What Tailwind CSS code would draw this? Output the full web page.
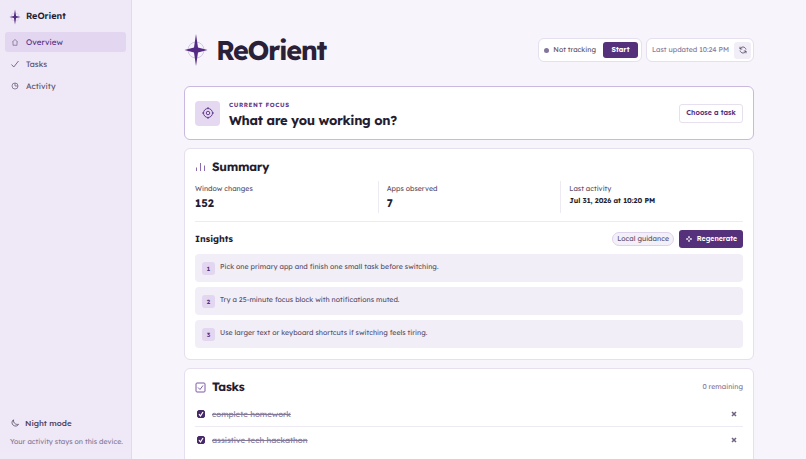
<!DOCTYPE html>
<html lang="en">
<head>
    <meta charset="UTF-8">
    <meta name="viewport" content="width=device-width, initial-scale=1.0">
    <title>ReOrient</title>
    <script src="https://cdn.jsdelivr.net/npm/@tailwindcss/browser@4"></script>
</head>
<body class="flex h-screen overflow-hidden bg-[#f7f5fb] font-[Lexend,Inter,sans-serif] text-[7px] leading-[10px] text-[#5b5169] antialiased [text-rendering:geometricPrecision]">
    <!-- Sidebar -->
    <aside class="flex w-[132px] shrink-0 flex-col border-r border-[#e2daec] bg-[#efe8f6] px-[5px] pt-2 pb-3">
        <a href="#" class="flex h-[18px] items-center gap-[5px] pl-1 text-[9px] font-semibold text-[#241d31]">
            <svg class="h-4 w-3" viewBox="0 0 24 32">
                <circle cx="12" cy="16" r="8" fill="none" stroke="#dccfea" stroke-width="1.5"/>
                <path d="M12 1l2.2 12.8L23 16l-8.800 2.200L12 31l-2.200-12.800L1 16l8.800-2.200z" fill="#512b80"/>
            </svg>
            ReOrient
        </a>
        <nav class="mt-[6px] flex flex-col gap-[2px] text-[8px]">
            <a href="#overview" class="flex h-5 items-center gap-[7px] rounded-[3px] bg-[#e3d6f0] px-[6px] text-[#553285]">
                <svg class="h-2 w-2" viewBox="0 0 16 16" fill="none" stroke="#6d6080" stroke-width="1.300"><path d="M2.500 8L8 3l5.500 5M4 7v7.500h8V7"/></svg>
                Overview
            </a>
            <a href="#tasks" class="flex h-5 items-center gap-[7px] rounded-[3px] px-[6px]">
                <svg class="h-2 w-2" viewBox="0 0 16 16" fill="none" stroke="#6d6080" stroke-width="1.800"><path d="M1 9l4.500 5L15 2"/></svg>
                Tasks
            </a>
            <a href="#activity" class="flex h-5 items-center gap-[7px] rounded-[3px] px-[6px]">
                <svg class="h-2 w-2" viewBox="0 0 16 16" fill="none" stroke="#6d6080" stroke-width="1.500"><circle cx="8" cy="8" r="6"/><path d="M8 2v6h6"/></svg>
                Activity
            </a>
        </nav>
        <button type="button" class="mt-auto flex h-5 items-center gap-[6px] px-[6px] text-[8px] font-medium text-[#4d425d]">
            <svg class="h-2 w-2" viewBox="0 0 16 16" fill="none" stroke="#4d425d" stroke-width="1.500"><path d="M5 1.500C1 4 1 10 4.500 12.500S13 15 15 10.500C11 12 4 9 5 1.500z"/></svg>
            Night mode
        </button>
        <p class="mt-1 pl-[5px] whitespace-nowrap text-[#85799a]">Your activity stays on this device.</p>
    </aside>

    <!-- Main content -->
    <main class="min-w-0 flex-1 overflow-hidden px-[52px] pt-[30px]">
        <header class="flex h-10 items-center justify-between">
            <div class="flex items-center gap-2">
                <svg class="h-8 w-6" viewBox="0 0 24 32">
                    <circle cx="12" cy="16" r="8" fill="none" stroke="#d3c7e2" stroke-width="1"/>
                    <path d="M12 0l2 13.500L23.500 16 14 18.500 12 32l-2-13.500L.5 16 10 13.500z" fill="#552a85"/>
                </svg>
                <h1 class="text-[27px] leading-8 font-bold tracking-tighter text-[#2a2139]">ReOrient</h1>
            </div>
            <div class="flex gap-1">
                <div class="flex h-6 items-center rounded-md border border-[#e5dfee] bg-white pr-[3px] pl-[5px]">
                    <span class="mr-1 h-[5px] w-[5px] rounded-full bg-[#82779a]"></span>
                    <span>Not tracking</span>
                    <button type="button" class="ml-[7px] h-4 w-[35px] rounded-[3px] bg-[#55307b] font-bold text-white">Start</button>
                </div>
                <div class="flex h-6 items-center gap-[5px] rounded-md border border-[#e5dfee] bg-white pr-[2px] pl-[5px] text-[#85799a]">
                    <span>Last updated 10:24 PM</span>
                    <button type="button" aria-label="Refresh" class="flex h-[17px] w-[17px] items-center justify-center rounded-[3px] bg-[#f2eef8]">
                        <svg class="h-2 w-2" viewBox="0 0 16 16" fill="none" stroke="#4d425d" stroke-width="1.600"><path d="M2 1.500V6h4.500M2 6C4 1 12 0 14 7M14 14.500V10H9.500M14 10C12 15 4 16 2 9"/></svg>
                    </button>
                </div>
            </div>
        </header>

        <!-- Current focus -->
        <section class="mt-4 flex h-[54px] items-center rounded-md border border-[#c9b9de] bg-white px-[10px]">
            <div class="flex h-[25px] w-[25px] items-center justify-center rounded-[4px] bg-[#e5d8f1]">
                <svg class="h-3 w-3" viewBox="0 0 24 24" fill="none" stroke="#65408f" stroke-width="2"><circle cx="12" cy="12" r="9"/><circle cx="12" cy="12" r="3.500"/><path d="M12 0v4M12 20v4M0 12h4M20 12h4"/></svg>
            </div>
            <div class="ml-[9px] pt-[2px]">
                <p class="text-[6px] leading-[10px] font-bold tracking-widest text-[#603a8c]">CURRENT FOCUS</p>
                <h2 class="mt-[3px] text-[13px] leading-4 font-bold tracking-tight text-[#241d31]">What are you working on?</h2>
            </div>
            <button type="button" class="ml-auto h-[19px] w-16 rounded-[3px] border border-[#e5dfee] font-semibold whitespace-nowrap text-[#55307b]">Choose a task</button>
        </section>

        <!-- Summary -->
        <section id="overview" class="mt-2 rounded-md border border-[#e5dfee] bg-white px-[10px] pt-[10px] pb-[11px]">
            <div class="flex h-4 items-center gap-[6px]">
                <svg class="h-[11px] w-[11px]" viewBox="0 0 22 22" fill="none" stroke="#8a6bad" stroke-width="2"><path d="M3 11v7M11 2v16M19 7v11"/></svg>
                <h2 class="text-[12px] leading-4 font-bold tracking-tight text-[#241d31]">Summary</h2>
            </div>
            <dl class="mt-[6px] grid grid-cols-3 border-b border-[#eeeaf3] pb-2">
                <div class="h-8 py-[3px]">
                    <dt>Window changes</dt>
                    <dd class="mt-[3px] text-[11px] leading-3 font-bold text-[#241d31]">152</dd>
                </div>
                <div class="h-8 border-l border-[#eeeaf3] py-[3px] pl-2">
                    <dt>Apps observed</dt>
                    <dd class="mt-[3px] text-[11px] leading-3 font-bold text-[#241d31]">7</dd>
                </div>
                <div class="h-8 border-l border-[#eeeaf3] py-[3px] pl-2">
                    <dt>Last activity</dt>
                    <dd class="mt-[2px] font-bold text-[#241d31]">Jul 31, 2026 at 10:20 PM</dd>
                </div>
            </dl>
            <div class="mt-2 flex h-[18px] items-center gap-[5px]">
                <h3 class="mr-auto pt-[2px] text-[9px] font-bold text-[#241d31]">Insights</h3>
                <span class="flex h-[14px] items-center rounded-full border border-[#ddd3ea] bg-[#f4f0f9] px-1">Local guidance</span>
                <button type="button" class="flex h-[18px] w-16 items-center justify-center gap-1 rounded-[3px] bg-[#55307b] font-semibold text-white">
                    <svg class="h-2 w-2" viewBox="0 0 16 16" fill="none" stroke="#ffffff" stroke-width="1.300"><path d="M8 2l1.500 4.500L14 8 9.500 9.500 8 14 6.500 9.500 2 8l4.500-1.500z"/></svg>
                    Regenerate
                </button>
            </div>
            <ol class="mt-[6px] flex flex-col gap-[5px]">
                <li class="flex h-7 items-start gap-[5px] rounded-[4px] bg-[#f2eef8] px-[7px] pt-2">
                    <span class="flex h-[13px] w-[13px] items-center justify-center rounded-[3px] bg-[#e3d6f0] text-[6px] font-bold text-[#55307b]">1</span>
                    Pick one primary app and finish one small task before switching.
                </li>
                <li class="flex h-7 items-start gap-[5px] rounded-[4px] bg-[#f2eef8] px-[7px] pt-2">
                    <span class="flex h-[13px] w-[13px] items-center justify-center rounded-[3px] bg-[#e3d6f0] text-[6px] font-bold text-[#55307b]">2</span>
                    Try a 25-minute focus block with notifications muted.
                </li>
                <li class="flex h-7 items-start gap-[5px] rounded-[4px] bg-[#f2eef8] px-[7px] pt-2">
                    <span class="flex h-[13px] w-[13px] items-center justify-center rounded-[3px] bg-[#e3d6f0] text-[6px] font-bold text-[#55307b]">3</span>
                    Use larger text or keyboard shortcuts if switching feels tiring.
                </li>
            </ol>
        </section>

        <!-- Tasks -->
        <section id="tasks" class="mt-2 rounded-md border border-[#e5dfee] bg-white px-[10px] pt-[10px] pb-6">
            <div class="flex h-4 items-center gap-[6px]">
                <svg class="h-[11px] w-[11px]" viewBox="0 0 22 22" fill="none" stroke="#7d5ba5" stroke-width="2"><rect x="2" y="2" width="18" height="18" rx="2"/><path d="M6 11l4 4 6-8"/></svg>
                <h2 class="text-[12px] leading-4 font-bold tracking-tight text-[#241d31]">Tasks</h2>
                <span class="ml-auto text-[#85799a]">0 remaining</span>
            </div>
            <ul class="mt-[6px] text-[8px] text-[#85799a]">
                <li class="flex h-[26px] items-center border-b border-[#eeeaf3] pr-[5px] pl-[2px]">
                    <label class="flex items-center gap-[7px]">
                        <span class="relative flex">
                            <input type="checkbox" checked class="peer h-2 w-2 appearance-none rounded-[2px] border border-[#472868] checked:bg-[#472868]">
                            <svg class="pointer-events-none absolute inset-0 hidden h-2 w-2 peer-checked:block" viewBox="0 0 16 16" fill="none" stroke="#ffffff" stroke-width="2.500"><path d="M4 8l3 4 5-8"/></svg>
                        </span>
                        <span class="line-through">complete homework</span>
                    </label>
                    <button type="button" aria-label="Remove complete homework" class="ml-auto flex h-2 w-2 items-center justify-center">
                        <svg class="h-[6px] w-[6px]" viewBox="0 0 12 12" stroke="#6d6080" stroke-width="3"><path d="M2 2l8 8M10 2l-8 8"/></svg>
                    </button>
                </li>
                <li class="flex h-[25px] items-center pr-[5px] pl-[2px]">
                    <label class="flex items-center gap-[7px]">
                        <span class="relative flex">
                            <input type="checkbox" checked class="peer h-2 w-2 appearance-none rounded-[2px] border border-[#472868] checked:bg-[#472868]">
                            <svg class="pointer-events-none absolute inset-0 hidden h-2 w-2 peer-checked:block" viewBox="0 0 16 16" fill="none" stroke="#ffffff" stroke-width="2.500"><path d="M4 8l3 4 5-8"/></svg>
                        </span>
                        <span class="line-through">assistive tech hackathon</span>
                    </label>
                    <button type="button" aria-label="Remove assistive tech hackathon" class="ml-auto flex h-2 w-2 items-center justify-center">
                        <svg class="h-[6px] w-[6px]" viewBox="0 0 12 12" stroke="#6d6080" stroke-width="3"><path d="M2 2l8 8M10 2l-8 8"/></svg>
                    </button>
                </li>
            </ul>
        </section>
    </main>
</body>
</html>
